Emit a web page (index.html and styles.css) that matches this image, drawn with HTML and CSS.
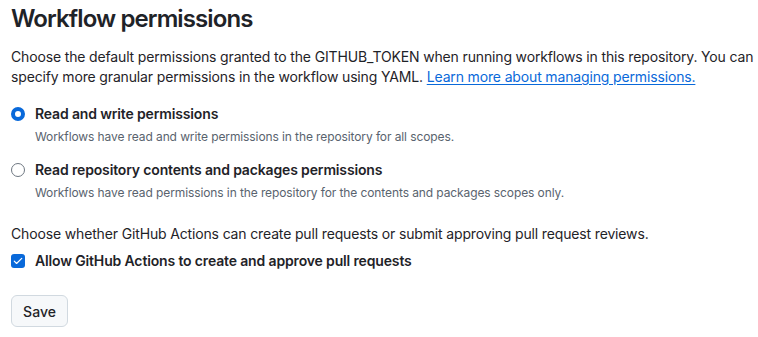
FILE: index.html
```html
<!DOCTYPE html>
<html lang="en">
<head>
<meta charset="utf-8">
<title>Workflow permissions</title>
<link rel="stylesheet" href="styles.css">
</head>
<body>
<main class="page">
  <h2 class="title">Workflow permissions</h2>
  <p class="intro">Choose the default permissions granted to the GITHUB_TOKEN when running workflows in this repository. You can specify more granular permissions in the workflow using YAML. <a class="link" href="#">Learn more about managing permissions.</a></p>

  <div class="options">
    <label class="option">
      <span class="radio radio-checked"></span>
      <span class="option-text">
        <span class="option-label">Read and write permissions</span>
        <span class="option-note">Workflows have read and write permissions in the repository for all scopes.</span>
      </span>
    </label>
    <label class="option">
      <span class="radio"></span>
      <span class="option-text">
        <span class="option-label">Read repository contents and packages permissions</span>
        <span class="option-note">Workflows have read permissions in the repository for the contents and packages scopes only.</span>
      </span>
    </label>
  </div>

  <p class="intro second">Choose whether GitHub Actions can create pull requests or submit approving pull request reviews.</p>
  <label class="check-row">
    <span class="checkbox">
      <svg viewBox="0 0 16 16" width="12" height="12" aria-hidden="true"><path d="M3 8.2l3.1 3.1L13 4.4" fill="none" stroke="#fff" stroke-width="1.6" stroke-linecap="round" stroke-linejoin="round"/></svg>
    </span>
    <span class="option-label">Allow GitHub Actions to create and approve pull requests</span>
  </label>

  <div class="actions">
    <button class="btn" type="button">Save</button>
  </div>
</main>
</body>
</html>
```

FILE: styles.css
```css
* { box-sizing: border-box; }
html, body { margin: 0; padding: 0; background: #ffffff; }
body {
  font-family: Inter, "Noto Sans", "Liberation Sans", sans-serif;
  color: #1f2328;
  font-size: 14px;
  line-height: 21px;
}
.page {
  padding: 4px 0 0 11px;
  display: flex;
  flex-direction: column;
}
.title {
  margin: 0;
  font-size: 24px;
  line-height: 30px;
  font-weight: 600;
  letter-spacing: -0.9px;
}
.intro {
  margin: 13px 0 0 0;
  font-size: 14px;
  line-height: 20px;
  letter-spacing: -0.15px;
}
.link {
  color: #0969da;
  text-decoration: underline;
  text-underline-offset: 2px;
}
.options {
  display: flex;
  flex-direction: column;
  gap: 13px;
  margin-top: 17px;
}
.option {
  display: flex;
  align-items: flex-start;
  gap: 10px;
}
.radio {
  flex: none;
  width: 14px;
  height: 14px;
  margin-top: 3px;
  border-radius: 50%;
  border: 1px solid #6e7781;
  background: #fff;
}
.radio-checked {
  border: 4px solid #0969da;
}
.option-text {
  display: flex;
  flex-direction: column;
}
.option-label {
  font-weight: 600;
  font-size: 14px;
  line-height: 20px;
  letter-spacing: -0.15px;
}
.option-note {
  margin-top: 3px;
  font-size: 12px;
  line-height: 20px;
  color: #59636e;
  letter-spacing: -0.1px;
}
.second {
  margin-top: 21px;
}
.check-row {
  display: flex;
  align-items: center;
  gap: 10px;
  margin-top: 7px;
}
.checkbox {
  flex: none;
  width: 14px;
  height: 14px;
  border-radius: 3px;
  background: #0969da;
  display: flex;
  align-items: center;
  justify-content: center;
}
.actions {
  display: flex;
  margin-top: 24px;
}
.btn {
  font-family: inherit;
  font-size: 14px;
  font-weight: 500;
  color: #1f2328;
  background: #f6f8fa;
  border: 1px solid #d1d9e0;
  border-radius: 6px;
  width: 57px;
  height: 32px;
  padding: 0;
}
```
